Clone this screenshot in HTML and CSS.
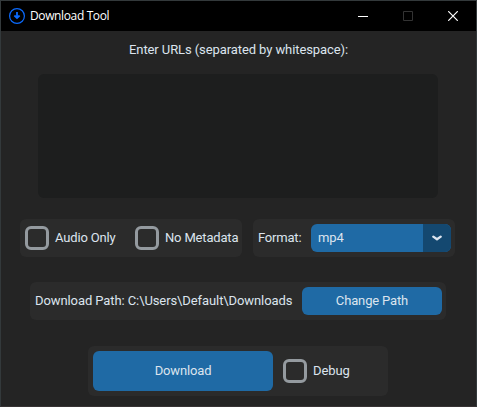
FILE: index.html
```html
<!DOCTYPE html>
<html lang="en">
<head>
<meta charset="utf-8">
<title>Download Tool</title>
<link rel="stylesheet" href="styles.css">
</head>
<body>
<div class="window">
  <header class="titlebar">
    <svg class="logo" width="16" height="16" viewBox="0 0 16 16" fill="none" stroke="#0b6bff">
      <circle cx="8" cy="8" r="7.4" stroke-width="1.2"/>
      <path d="M8 4v6.5M5.4 7.5 8 10.1 10.6 7.5" stroke-width="1.8"/>
    </svg>
    <span class="title">Download Tool</span>
    <div class="controls">
      <svg width="10" height="10" viewBox="0 0 10 10"><path d="M0 5.5h10" stroke="#fff"/></svg>
      <svg width="10" height="10" viewBox="0 0 10 10"><path d="M.5.5h9v9h-9z" fill="none" stroke="#333"/></svg>
      <svg width="10" height="10" viewBox="0 0 10 10"><path d="M.2.2l9.6 9.6M9.8.2.2 9.8" stroke="#fff" stroke-width="1.2"/></svg>
    </div>
  </header>
  <main class="content">
    <label class="prompt" for="urls">Enter URLs (separated by whitespace):</label>
    <textarea class="urls" id="urls"></textarea>
    <div class="options">
      <div class="frame checks">
        <label class="check audio"><i class="box"></i><span>Audio Only</span></label>
        <label class="check"><i class="box"></i><span>No Metadata</span></label>
      </div>
      <div class="frame format">
        <span class="format-label">Format:</span>
        <div class="select">
          <span class="value">mp4</span>
          <span class="arrow"><svg width="10" height="6" viewBox="0 0 10 6"><path d="M1.3 1.6 5 4.3 8.7 1.6" fill="none" stroke="#dce4ee" stroke-width="2.3" stroke-linecap="round" stroke-linejoin="round"/></svg></span>
        </div>
      </div>
    </div>
    <div class="frame path">
      <span class="path-text">Download Path: C:\Users\Default\Downloads</span>
      <button class="button change">Change Path</button>
    </div>
    <div class="frame actions">
      <button class="button download">Download</button>
      <label class="check"><i class="box"></i><span>Debug</span></label>
    </div>
  </main>
</div>
</body>
</html>
```
FILE: styles.css
```css
* { box-sizing: border-box; }
body { margin: 0; background: #242424; }
.window {
  width: 477px;
  height: 407px;
  border: 1px solid #33393b;
  border-bottom-color: #373334;
  background: #242424;
  color: #dce4ee;
  font: 13px/16px Roboto, sans-serif;
  letter-spacing: -0.09px;
  overflow: hidden;
  white-space: nowrap;
}
.titlebar {
  display: flex;
  align-items: center;
  height: 30px;
  padding: 0 18px 0 8px;
  background: #000;
}
.title {
  margin-left: 5px;
  color: #fff;
  font: 12px/16px "Open Sans", sans-serif;
  letter-spacing: -0.37px;
}
.controls { display: flex; gap: 35px; margin-left: auto; }
.controls svg { display: block; }
.content { display: flex; flex-direction: column; }
.prompt { height: 43px; padding: 11px 0 0 128px; }
.urls {
  width: 400px;
  height: 124px;
  margin-left: 37px;
  padding: 6px;
  border: 0;
  border-radius: 6px;
  background: #1d1e1e;
  color: inherit;
  font: inherit;
  resize: none;
  outline: 0;
}
.options { display: flex; gap: 11px; margin: 21px 0 0 19px; }
.frame {
  display: flex;
  align-items: center;
  height: 38px;
  padding: 0 5px;
  border-radius: 6px;
  background: #2b2b2b;
}
.checks { width: 222px; padding-right: 0; letter-spacing: -0.17px; }
.check { display: flex; flex-shrink: 0; align-items: center; gap: 6px; }
.audio { width: 110px; }
.box {
  width: 24px;
  height: 24px;
  border: 3px solid #949a9f;
  border-radius: 6px;
}
.format { width: 202px; }
.format-label { letter-spacing: -0.2px; }
.select {
  display: flex;
  width: 140px;
  height: 28px;
  margin-left: auto;
  margin-right: -1px;
  border-radius: 6px;
  background: #1f6aa5;
  overflow: hidden;
}
.value { flex: 1; padding: 6px 0 0 7px; }
.arrow {
  display: flex;
  align-items: center;
  justify-content: center;
  width: 28px;
  background: #144870;
}
.path { width: 416px; margin: 25px 0 0 29px; }
.button {
  padding: 0;
  border: 0;
  border-radius: 6px;
  background: #1f6aa5;
  color: #dce4ee;
  font: inherit;
  letter-spacing: -0.15px;
}
.change { width: 140px; height: 28px; margin-left: auto; margin-right: -1px; }
.actions { width: 300px; height: 50px; margin: 26px 0 0 87px; gap: 10px; }
.download { width: 180px; height: 40px; }
```
